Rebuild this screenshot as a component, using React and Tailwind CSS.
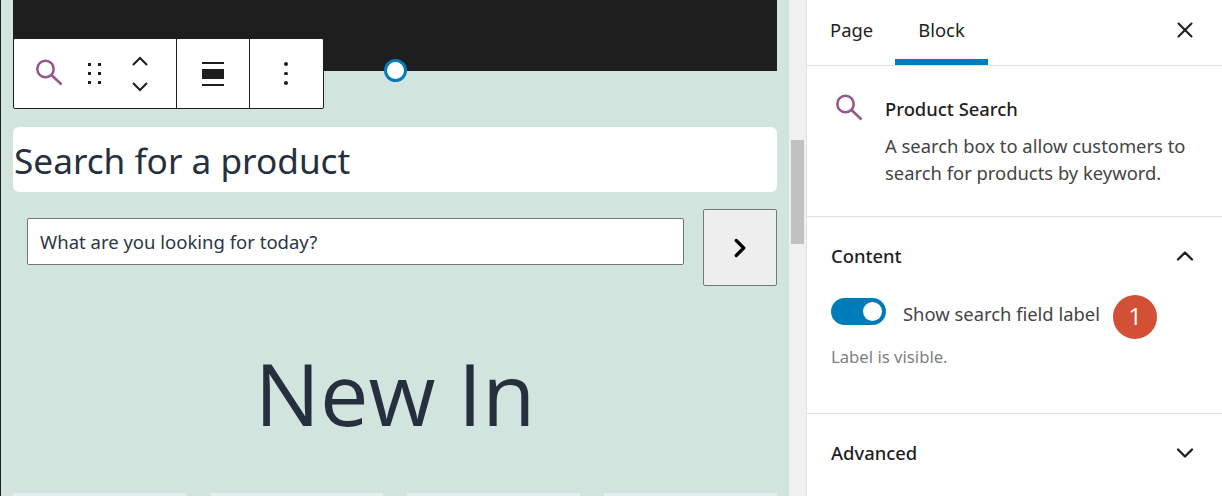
import { ChevronDown, ChevronUp, ChevronRight, X } from 'lucide-react';

const font = "font-['Noto_Sans',sans-serif]";

function SearchIcon({ className }) {
  return (
    <svg className={className} width="30" height="30" viewBox="0 0 30 30" fill="none" stroke="#96588a" strokeWidth="2.6">
      <circle cx="12.5" cy="12" r="8.2" />
      <path d="M18.5 18l10 9.5" />
    </svg>
  );
}

function Toolbar() {
  return (
    <div className="absolute left-[12px] top-[38px] z-10 flex h-[71px] w-[311px] rounded-[2px] border border-[#1e1e1e] bg-white">
      <div className="flex w-[163px] items-center border-r border-[#1e1e1e]">
        <SearchIcon className="ml-[18.5px] mt-[-3px]" />
        <svg className="ml-[24.5px]" width="16" height="24" viewBox="0 0 16 24" fill="#1e1e1e">
          <rect x="1" y="1" width="3" height="3" />
          <rect x="11" y="1" width="3" height="3" />
          <rect x="1" y="10" width="3" height="3" />
          <rect x="11" y="10" width="3" height="3" />
          <rect x="1" y="19" width="3" height="3" />
          <rect x="11" y="19" width="3" height="3" />
        </svg>
        <div className="ml-[28px] flex flex-col gap-[14px]">
          <svg width="18" height="11" viewBox="0 0 18 11" fill="none" stroke="#1e1e1e" strokeWidth="2"><path d="M2 9l7-7 7 7" /></svg>
          <svg width="18" height="11" viewBox="0 0 18 11" fill="none" stroke="#1e1e1e" strokeWidth="2"><path d="M2 2l7 7 7-7" /></svg>
        </div>
      </div>
      <div className="flex w-[73px] items-center justify-center border-r border-[#1e1e1e]">
        <div className="flex w-[22px] flex-col gap-[5px]">
          <div className="h-[2px] bg-[#1e1e1e]" />
          <div className="h-[10px] bg-[#1e1e1e]" />
          <div className="h-[2px] bg-[#1e1e1e]" />
        </div>
      </div>
      <div className="flex flex-1 flex-col items-center justify-center gap-[6px] pr-[1px]">
        <div className="size-[3.5px] rounded-full bg-[#1e1e1e]" />
        <div className="size-[3.5px] rounded-full bg-[#1e1e1e]" />
        <div className="size-[3.5px] rounded-full bg-[#1e1e1e]" />
      </div>
    </div>
  );
}

function Canvas() {
  return (
    <div className="relative h-full w-[789px] shrink-0 overflow-hidden border-l border-[#1e1e1e] bg-[#d2e4de] pl-[12px] pr-[12px]">
      <Toolbar />
      <div className="relative h-[71px] bg-[#1e1e1e]">
        <div className="absolute bottom-[-11px] left-[371px] size-[23px] rounded-full border-[3px] border-[#007cba] bg-white" />
      </div>
      <div className="mt-[56px] flex h-[65px] items-center rounded-[6px] bg-white pl-[1px] pt-[2px] text-[35.2px] text-[#252f3d]">
        Search for a product
      </div>
      <div className="mt-[17px] flex items-start pl-[14px]">
        <div className="mt-[9px] flex h-[47px] w-[657px] items-center rounded-[2px] border border-[#757575] bg-white pl-[12px] text-[18.5px] text-[#2b3648]">
          What are you looking for today?
        </div>
        <div className="ml-[19px] flex h-[77px] w-[74px] items-center justify-center rounded-[2px] border border-[#757575] bg-[#eeeeee]">
          <ChevronRight size={30} strokeWidth={2.6} color="#000000" />
        </div>
      </div>
      <div className="mt-[37px] text-center font-['Open_Sans',sans-serif] text-[86.5px] leading-[140px] text-[#252f3d]">New In</div>
      <div className="mt-[30px] grid grid-cols-4 gap-[24px]">
        <div className="h-[10px] bg-[#e6eff0]" />
        <div className="h-[10px] bg-[#e6eff0]" />
        <div className="h-[10px] bg-[#e6eff0]" />
        <div className="h-[10px] bg-[#e6eff0]" />
      </div>
    </div>
  );
}

function Scrollbar() {
  return (
    <div className="h-full w-[18px] shrink-0 border-r border-[#e0e0e0] bg-[#f0f0f0] pl-[2px] pr-[2px] pt-[140px]">
      <div className="h-[104px] bg-[#c1c1c1]" />
    </div>
  );
}

function Sidebar() {
  return (
    <div className="h-full flex-1 bg-white text-[18.4px] text-[#1e1e1e]">
      <div className="flex h-[66px] items-stretch border-b border-[#e0e0e0] pr-[24px]">
        <div className="flex w-[88px] items-center pb-[6px] pl-[23px]">Page</div>
        <div className="flex w-[93px] items-center justify-center border-b-[6px] border-[#007cba]">Block</div>
        <div className="flex flex-1 items-center justify-end pb-[6px]">
          <X size={26} strokeWidth={1.9} color="#1e1e1e" />
        </div>
      </div>
      <div className="flex h-[151px] border-b border-[#e0e0e0] pl-[25.5px] pt-[26px]">
        <SearchIcon className="shrink-0" />
        <div className="ml-[22.5px] mt-[1px]">
          <div className="leading-[32px] font-medium">Product Search</div>
          <div className="mt-[7px] leading-[27px] text-[#444444]">
            A search box to allow customers to
            <br />
            search for products by keyword.
          </div>
        </div>
      </div>
      <div className="h-[197px] border-b border-[#e0e0e0] px-[24px] pt-[24px]">
        <div className="flex h-[30px] items-center justify-between">
          <span className="font-medium">Content</span>
          <ChevronUp size={28} strokeWidth={2} color="#1e1e1e" className="mr-[-1px]" />
        </div>
        <div className="relative mt-[24px] flex items-center">
          <div className="flex h-[27px] w-[55px] items-center justify-end rounded-full bg-[#007cba] pr-[4px]">
            <div className="size-[19px] rounded-full bg-white" />
          </div>
          <span className="ml-[17px] pt-[5px] text-[#444444]">Show search field label</span>
          <div className="absolute left-[282px] top-[0px] flex size-[44px] items-center justify-center rounded-full bg-[#d25036] pb-[3px] font-['Open_Sans',sans-serif] text-[24px] font-medium text-white">1</div>
        </div>
        <div className="mt-[16px] text-[16.7px] text-[#808080]">Label is visible.</div>
      </div>
      <div className="flex h-[78px] items-center justify-between px-[24px]">
        <span className="font-medium">Advanced</span>
        <ChevronDown size={28} strokeWidth={2} color="#1e1e1e" className="mr-[-1px]" />
      </div>
    </div>
  );
}

export default function App() {
  return (
    <div className={`flex h-[496px] w-[1222px] overflow-hidden ${font}`}>
      <Canvas />
      <Scrollbar />
      <Sidebar />
    </div>
  );
}
